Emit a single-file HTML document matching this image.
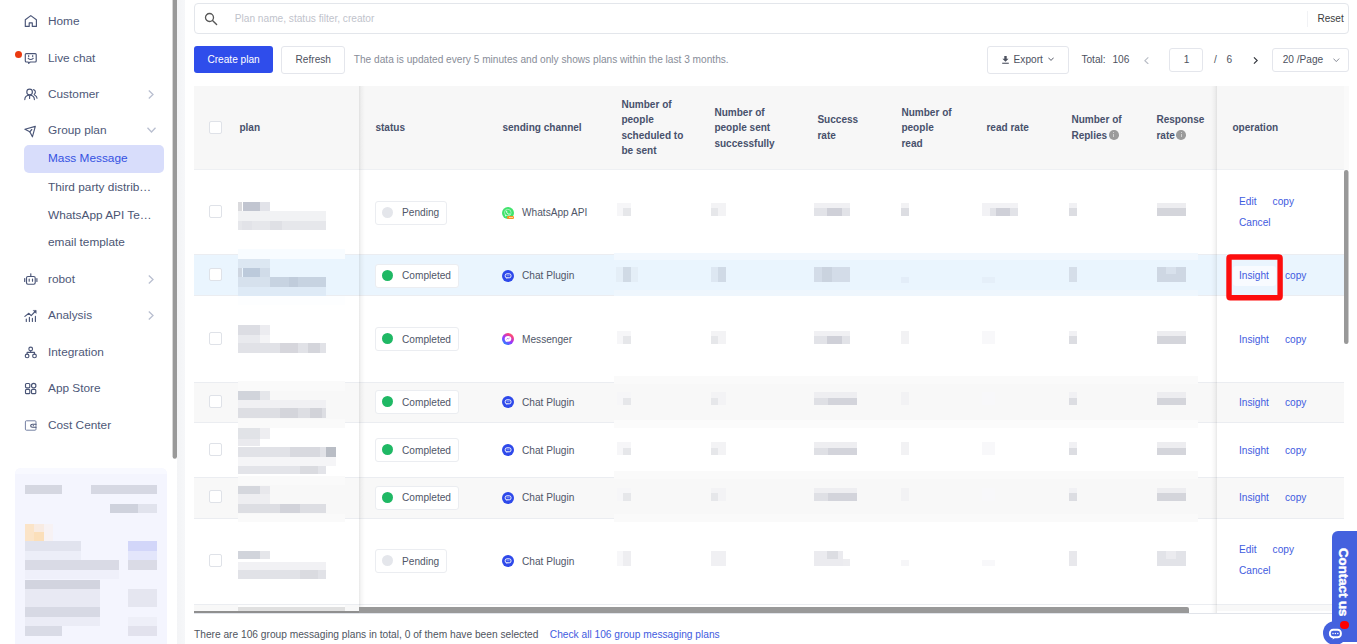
<!DOCTYPE html>
<html><head><meta charset="utf-8"><title>Mass Message</title><style>
*{box-sizing:border-box;margin:0;padding:0}
html,body{width:1357px;height:644px;overflow:hidden;background:#fff}
body{font-family:"Liberation Sans",sans-serif;position:relative;color:#4e5878}
.a{position:absolute}
.t{position:absolute;white-space:nowrap;line-height:1}
.sb{font-size:11.83px;color:#4e5878}
.b{position:absolute}
.th{position:absolute;font-weight:bold;font-size:10.05px;color:#48516c;line-height:14.2px;white-space:nowrap}
.c{font-size:10.15px;color:#4f5668}
.lnk{font-size:10.15px;color:#3f5ce0}
.tag{position:absolute;height:23.8px;border:1px solid #ebedf1;border-radius:3px;background:#fff}
.dot{position:absolute;width:11px;height:11px;border-radius:50%}
.cb{position:absolute;width:13px;height:13px;border:1px solid #dfe2e8;border-radius:2px;background:#fff}
</style></head><body>
<div class="a" style="left:177px;top:0;width:8px;height:644px;background:linear-gradient(90deg,#f3f4f6,#f6f7f9)"></div>
<svg class="a" style="left:170px;top:0" width="10" height="462" viewBox="170 0 10 462"><rect x="172.6" y="-5" width="4.4" height="463.7" rx="2.2" fill="#999"/></svg>
<div class="t sb" style="left:48px;top:15.5px">Home</div>
<div class="t sb" style="left:48px;top:52.5px">Live chat</div>
<div class="t sb" style="left:48px;top:88.5px">Customer</div>
<div class="t sb" style="left:48px;top:124.5px">Group plan</div>
<div class="t sb" style="left:48px;top:273.5px">robot</div>
<div class="t sb" style="left:48px;top:309.5px">Analysis</div>
<div class="t sb" style="left:48px;top:346.5px">Integration</div>
<div class="t sb" style="left:48px;top:382.5px">App Store</div>
<div class="t sb" style="left:48px;top:419.5px">Cost Center</div>
<div class="a" style="left:24px;top:145px;width:140px;height:28px;background:#d8ddfb;border-radius:5px"></div>
<div class="t sb" style="left:48px;top:152.5px;color:#3451e2">Mass Message</div>
<div class="t sb" style="left:48px;top:181.5px;color:#4b5573">Third party distrib…</div>
<div class="t sb" style="left:48px;top:209.5px;color:#4b5573">WhatsApp API Te…</div>
<div class="t sb" style="left:48px;top:236.5px;color:#4b5573">email template</div>
<div class="a" style="left:15px;top:51px;width:7px;height:7px;border-radius:50%;background:#ea3a10"></div>
<svg class="a" style="left:148px;top:89.5px" width="6" height="9" viewBox="0 0 6 9"><path d="M0.8 0.5 L5 4.5 L0.8 8.5" fill="none" stroke="#b9bfd0" stroke-width="1.3"/></svg>
<svg class="a" style="left:148px;top:274.5px" width="6" height="9" viewBox="0 0 6 9"><path d="M0.8 0.5 L5 4.5 L0.8 8.5" fill="none" stroke="#b9bfd0" stroke-width="1.3"/></svg>
<svg class="a" style="left:148px;top:310.5px" width="6" height="9" viewBox="0 0 6 9"><path d="M0.8 0.5 L5 4.5 L0.8 8.5" fill="none" stroke="#b9bfd0" stroke-width="1.3"/></svg>
<svg class="a" style="left:147px;top:126.6px" width="9" height="6" viewBox="0 0 9 6"><path d="M0.5 0.8 L4.5 5 L8.5 0.8" fill="none" stroke="#b9bfd0" stroke-width="1.3"/></svg>
<svg class="a" style="left:24px;top:14px;overflow:visible" width="14" height="14" viewBox="24 14 14 14" ><path d="M25.3 26.4V19.8L30.8 15.6L36.4 19.8V26.4H32.3V22.9H29.2V26.4Z" fill="none" stroke="#4a5577" stroke-width="1.15" stroke-linejoin="round" stroke-linecap="round" stroke-linejoin="miter"/></svg>
<svg class="a" style="left:24px;top:52px;overflow:visible" width="14" height="13" viewBox="24 52 14 13" ><path d="M26.3 53.6H35.2Q36.2 53.6 36.2 54.6V61Q36.2 62 35.2 62H30.2L28.7 63.4L28.2 62H26.3Q25.3 62 25.3 61V54.6Q25.3 53.6 26.3 53.6Z" fill="none" stroke="#4a5577" stroke-width="1.15" stroke-linejoin="round" stroke-linecap="round"/><path d="M28.7 55.6V56.6M32.7 55.6V56.6" fill="none" stroke="#4a5577" stroke-width="1.15" stroke-linejoin="round" stroke-linecap="round"/><path d="M28.2 58.4Q30.7 60.6 33.2 58.4" fill="none" stroke="#4a5577" stroke-width="1.15" stroke-linejoin="round" stroke-linecap="round"/></svg>
<svg class="a" style="left:24px;top:88px;overflow:visible" width="14" height="13" viewBox="24 88 14 13" ><circle cx="29.6" cy="91.9" r="2.8" fill="none" stroke="#4a5577" stroke-width="1.15" stroke-linejoin="round" stroke-linecap="round"/><path d="M24.8 99.6Q24.8 95.2 29.6 95.2Q34.4 95.2 34.4 99.6" fill="none" stroke="#4a5577" stroke-width="1.15" stroke-linejoin="round" stroke-linecap="round"/><path d="M29.6 95.8V98.4" fill="none" stroke="#4a5577" stroke-width="1.15" stroke-linejoin="round" stroke-linecap="round" stroke-width="0.9"/><path d="M33.6 89.6Q35.4 90.2 35.4 92.1Q35.4 93.6 34.2 94.5" fill="none" stroke="#4a5577" stroke-width="1.15" stroke-linejoin="round" stroke-linecap="round"/><path d="M34.8 95.2Q37 96.2 37 98.2" fill="none" stroke="#4a5577" stroke-width="1.15" stroke-linejoin="round" stroke-linecap="round"/></svg>
<svg class="a" style="left:24px;top:125px;overflow:visible" width="13" height="13" viewBox="24 125 13 13" ><path d="M35.3 126.4L24.9 129.3L29.8 131.8L32.4 136.8Z" fill="none" stroke="#4a5577" stroke-width="1.15" stroke-linejoin="round" stroke-linecap="round"/><path d="M29.8 131.8L31.8 129.5" fill="none" stroke="#4a5577" stroke-width="1.15" stroke-linejoin="round" stroke-linecap="round"/></svg>
<svg class="a" style="left:24px;top:273px;overflow:visible" width="14" height="12" viewBox="24 273 14 12" ><rect x="26.5" y="276.5" width="8.7" height="7.7" rx="1.4" fill="none" stroke="#4a5577" stroke-width="1.15" stroke-linejoin="round" stroke-linecap="round"/><path d="M30.8 273.8V276.3" fill="none" stroke="#4a5577" stroke-width="1.15" stroke-linejoin="round" stroke-linecap="round"/><path d="M24.7 278.6V281.4M36.9 278.6V281.4" fill="none" stroke="#4a5577" stroke-width="1.15" stroke-linejoin="round" stroke-linecap="round"/><path d="M29.2 279V281.2M32.5 279V281.2" fill="none" stroke="#4a5577" stroke-width="1.15" stroke-linejoin="round" stroke-linecap="round"/></svg>
<svg class="a" style="left:24px;top:309px;overflow:visible" width="14" height="13" viewBox="24 309 14 13" ><path d="M24.9 316.4L28.9 313.3L31.2 315.6L35.6 311" fill="none" stroke="#4a5577" stroke-width="1.15" stroke-linejoin="round" stroke-linecap="round"/><path d="M33.2 310.4H36.2V313.4Z" fill="#4a5577" stroke="#4a5577" stroke-width="0.5"/><path d="M26.3 319V321.5M29.4 317.4V321.5M32.4 318.4V321.5M35.4 316.4V321.5" fill="none" stroke="#4a5577" stroke-width="1.15" stroke-linejoin="round" stroke-linecap="round" stroke-linecap="butt"/></svg>
<svg class="a" style="left:24px;top:346px;overflow:visible" width="14" height="13" viewBox="24 346 14 13" ><circle cx="30.7" cy="348.9" r="1.85" fill="none" stroke="#4a5577" stroke-width="1.15" stroke-linejoin="round" stroke-linecap="round"/><circle cx="27.1" cy="355.9" r="1.85" fill="none" stroke="#4a5577" stroke-width="1.15" stroke-linejoin="round" stroke-linecap="round"/><circle cx="34.5" cy="355.9" r="1.85" fill="none" stroke="#4a5577" stroke-width="1.15" stroke-linejoin="round" stroke-linecap="round"/><path d="M30.7 350.8V352.4M27.1 354V352.4H34.5V354" fill="none" stroke="#4a5577" stroke-width="1.15" stroke-linejoin="round" stroke-linecap="round"/></svg>
<svg class="a" style="left:24px;top:382px;overflow:visible" width="14" height="13" viewBox="24 382 14 13" ><rect x="25.5" y="383.5" width="4.3" height="4.3" rx="1" fill="none" stroke="#4a5577" stroke-width="1.15" stroke-linejoin="round" stroke-linecap="round"/><circle cx="33.7" cy="385.65" r="2.2" fill="none" stroke="#4a5577" stroke-width="1.15" stroke-linejoin="round" stroke-linecap="round"/><rect x="25.5" y="389.4" width="4.3" height="4.3" rx="1" fill="none" stroke="#4a5577" stroke-width="1.15" stroke-linejoin="round" stroke-linecap="round"/><rect x="31.5" y="389.4" width="4.3" height="4.3" rx="1" fill="none" stroke="#4a5577" stroke-width="1.15" stroke-linejoin="round" stroke-linecap="round"/></svg>
<svg class="a" style="left:24px;top:419px;overflow:visible" width="14" height="13" viewBox="24 419 14 13" ><rect x="25.4" y="420.8" width="10.6" height="9.4" rx="1" fill="none" stroke="#6e7a9e" stroke-width="0.95"/><path d="M36 424.2H32.4Q30.7 424.2 30.7 425.7Q30.7 427.2 32.4 427.2H36" fill="none" stroke="#4a5577" stroke-width="1.15" stroke-linejoin="round" stroke-linecap="round" stroke-width="1"/><circle cx="33.3" cy="425.7" r="0.6" fill="#4a5577"/></svg>
<div class="a" style="left:15px;top:468px;width:152px;height:176px;background:#f4f5fe;border-radius:6px 6px 0 0"></div>
<div class="a" style="left:15px;top:468px;width:152px;height:6px;background:#f8f9ff;border-radius:6px 6px 0 0"></div>
<div class="b" style="left:25px;top:485px;width:37px;height:9px;background:#d5d7e1"></div>
<div class="b" style="left:91px;top:485px;width:66px;height:9px;background:#d6d8e3"></div>
<div class="b" style="left:110px;top:503.5px;width:28px;height:9.5px;background:#cfd2dd"></div>
<div class="b" style="left:138px;top:503.5px;width:19px;height:9.5px;background:#e1e3ed"></div>
<div class="b" style="left:25px;top:523.5px;width:9px;height:17.5px;background:#fbe4c8"></div>
<div class="b" style="left:34px;top:523.5px;width:10px;height:8.5px;background:#f8ebe2"></div>
<div class="b" style="left:34px;top:532px;width:10px;height:9px;background:#fbdfba"></div>
<div class="b" style="left:44px;top:523.5px;width:9px;height:17.5px;background:#f7f2f4"></div>
<div class="b" style="left:25px;top:541px;width:56px;height:10px;background:#e1e3ee"></div>
<div class="b" style="left:128px;top:541px;width:29px;height:10px;background:#d2d6f9"></div>
<div class="b" style="left:25px;top:551px;width:56px;height:9px;background:#eceef8"></div>
<div class="b" style="left:128px;top:551px;width:29px;height:9px;background:#e3e6fb"></div>
<div class="b" style="left:25px;top:560px;width:94px;height:10px;background:#d9dae5"></div>
<div class="b" style="left:128px;top:560px;width:29px;height:10px;background:#dadbe6"></div>
<div class="b" style="left:25px;top:570px;width:94px;height:9px;background:#eff0fa"></div>
<div class="b" style="left:25px;top:579.5px;width:75px;height:9.5px;background:#d2d4df"></div>
<div class="b" style="left:25px;top:589px;width:75px;height:18px;background:#e8e9f3"></div>
<div class="b" style="left:128px;top:589px;width:29px;height:18px;background:#e5e6f0"></div>
<div class="b" style="left:25px;top:607px;width:75px;height:10px;background:#d7d9e4"></div>
<div class="b" style="left:25px;top:617px;width:75px;height:9px;background:#ebecf6"></div>
<div class="b" style="left:128px;top:617px;width:29px;height:9px;background:#eeeff8"></div>
<div class="b" style="left:25px;top:626px;width:37px;height:10px;background:#d9dbe6"></div>
<div class="b" style="left:128px;top:626px;width:29px;height:10px;background:#e2e2ed"></div>
<div class="a" style="left:194px;top:3px;width:1154.6px;height:31px;border:1px solid #e3e6eb;border-radius:4px;background:#fff"></div>
<svg class="a" style="left:204px;top:12px" width="14" height="14" viewBox="0 0 14 14"><circle cx="5.5" cy="5.5" r="4" fill="none" stroke="#575757" stroke-width="1.3"/><path d="M8.5 8.5 L12.6 12.6" stroke="#575757" stroke-width="1.4" stroke-linecap="round"/></svg>
<div class="t" style="left:234.8px;top:14.2px;font-size:10.15px;color:#bfc3cc">Plan name, status filter, creator</div>
<div class="a" style="left:1307px;top:11px;width:1px;height:16px;background:#f1f2f5"></div>
<div class="t" style="left:1317.5px;top:14px;font-size:10.05px;color:#3c3c3e">Reset</div>
<div class="a" style="left:194px;top:46.4px;width:79px;height:26.9px;background:#2f4deb;border-radius:3px"></div>
<div class="t" style="left:207.4px;top:54.9px;font-size:10.15px;color:#fff">Create plan</div>
<div class="a" style="left:281.3px;top:46.2px;width:63.7px;height:27.5px;border:1px solid #e4e6ec;border-radius:3px;background:#fff"></div>
<div class="t" style="left:295.5px;top:54.9px;font-size:10.15px;color:#4d5260">Refresh</div>
<div class="t" style="left:353.8px;top:54.9px;font-size:10.15px;color:#888d98">The data is updated every 5 minutes and only shows plans within the last 3 months.</div>
<div class="a" style="left:987.2px;top:46.2px;width:81.7px;height:27.5px;border:1px solid #e4e6ec;border-radius:3px;background:#fff"></div>
<svg class="a" style="left:1002px;top:55.5px" width="7" height="8" viewBox="0 0 7 8"><path d="M2.3 0h2.4v2.8h1.9L3.5 5.8 0.4 2.8h1.9z" fill="#4d5260"/><rect x="0.2" y="6.7" width="6.6" height="1.1" fill="#4d5260"/></svg>
<div class="t" style="left:1013.6px;top:54.9px;font-size:10.15px;color:#4d5260">Export</div>
<svg class="a" style="left:1048px;top:57px" width="6" height="4.2" viewBox="0 0 9 6"><path d="M0.5 0.8 L4.5 5 L8.5 0.8" fill="none" stroke="#4d5260" stroke-width="1.4"/></svg>
<div class="t" style="left:1081.4px;top:54.9px;font-size:10.15px;color:#4d5260">Total:</div>
<div class="t" style="left:1112.4px;top:54.9px;font-size:10.15px;color:#4d5260">106</div>
<svg transform="scale(-1,1)" class="a" style="left:1143.6px;top:56.6px" width="5" height="7.4" viewBox="0 0 6 9"><path d="M0.8 0.5 L5 4.5 L0.8 8.5" fill="none" stroke="#b9bdc6" stroke-width="1.4"/></svg>
<div class="a" style="left:1169.1px;top:48.2px;width:33.9px;height:23.6px;border:1px solid #e4e6ec;border-radius:3px;background:#fff"></div>
<div class="t" style="left:1183.8px;top:54.9px;font-size:10.15px;color:#4d5260">1</div>
<div class="t" style="left:1214px;top:54.9px;font-size:10.15px;color:#4d5260">/</div>
<div class="t" style="left:1226.5px;top:54.9px;font-size:10.15px;color:#4d5260">6</div>
<svg class="a" style="left:1253.2px;top:57.2px" width="5.3" height="7" viewBox="0 0 6 9"><path d="M0.8 0.5 L5 4.5 L0.8 8.5" fill="none" stroke="#33363e" stroke-width="1.5"/></svg>
<div class="a" style="left:1272.2px;top:48.2px;width:76.4px;height:23.6px;border:1px solid #e4e6ec;border-radius:3px;background:#fff"></div>
<div class="t" style="left:1282.7px;top:54.9px;font-size:10.15px;color:#4d5260">20 /Page</div>
<svg class="a" style="left:1333px;top:58px" width="6.6" height="4.3" viewBox="0 0 9 6"><path d="M0.5 0.8 L4.5 5 L8.5 0.8" fill="none" stroke="#6a6f7c" stroke-width="1.1"/></svg>
<div class="a" style="left:194px;top:86px;width:1154px;height:84px;background:#f7f7f7"></div>
<div class="a" style="left:194px;top:170px;width:1150px;height:85.2px;background:#fff"></div>
<div class="a" style="left:194px;top:254.2px;width:1150px;height:1px;background:#ebedf1"></div>
<div class="a" style="left:194px;top:255.2px;width:1150px;height:40.6px;background:#eaf5fe"></div>
<div class="a" style="left:194px;top:294.8px;width:1150px;height:1px;background:#ebedf1"></div>
<div class="a" style="left:194px;top:295.8px;width:1150px;height:87.0px;background:#fff"></div>
<div class="a" style="left:194px;top:381.8px;width:1150px;height:1px;background:#ebedf1"></div>
<div class="a" style="left:194px;top:382.8px;width:1150px;height:39.7px;background:#f8f8f8"></div>
<div class="a" style="left:194px;top:421.5px;width:1150px;height:1px;background:#ebedf1"></div>
<div class="a" style="left:194px;top:422.5px;width:1150px;height:55.2px;background:#fff"></div>
<div class="a" style="left:194px;top:476.7px;width:1150px;height:1px;background:#ebedf1"></div>
<div class="a" style="left:194px;top:477.7px;width:1150px;height:40.8px;background:#f8f8f8"></div>
<div class="a" style="left:194px;top:517.5px;width:1150px;height:1px;background:#ebedf1"></div>
<div class="a" style="left:194px;top:518.5px;width:1150px;height:86.0px;background:#fff"></div>
<div class="a" style="left:194px;top:603.5px;width:1150px;height:1px;background:#ebedf1"></div>
<div class="a" style="left:194px;top:604.5px;width:165px;height:6.5px;background:#f8f8f8"></div>
<div class="a" style="left:1217px;top:604.5px;width:127px;height:6.5px;background:#f8f8f8"></div>
<div class="a" style="left:238px;top:604.5px;width:107px;height:2.5px;background:#fdfdfd"></div>
<div class="b" style="left:614px;top:252.5px;width:584.0px;height:7.1px;background:#f2f8fe"></div>
<div class="b" style="left:614px;top:290px;width:584.0px;height:5.8px;background:#eef6fd"></div>
<div class="b" style="left:614px;top:376px;width:584.0px;height:7.8px;background:#fafafa"></div>
<div class="b" style="left:614px;top:419.9px;width:584.0px;height:8.1px;background:#fbfbfb"></div>
<div class="b" style="left:614px;top:471.3px;width:584.0px;height:7.6px;background:#fafafa"></div>
<div class="b" style="left:614px;top:514.4px;width:584.0px;height:7.9px;background:#fafafa"></div>
<div class="b" style="left:238px;top:381.3px;width:107.0px;height:9.3px;background:#fafafa"></div>
<div class="b" style="left:238px;top:419px;width:107.0px;height:8.7px;background:#fafafa"></div>
<div class="b" style="left:238px;top:476px;width:107.0px;height:9.0px;background:#fafafa"></div>
<div class="b" style="left:238px;top:513.5px;width:107.0px;height:8.8px;background:#fafafa"></div>
<div class="b" style="left:237.8px;top:202px;width:4.7px;height:9.0px;background:#dadadd"></div>
<div class="b" style="left:242.5px;top:202px;width:17.5px;height:9.0px;background:#c1c5d0"></div>
<div class="b" style="left:260px;top:202px;width:10.0px;height:9.0px;background:#e2e3e9"></div>
<div class="b" style="left:237.8px;top:211px;width:88.2px;height:10.0px;background:#f1f2f4"></div>
<div class="b" style="left:237.8px;top:221px;width:88.2px;height:9.0px;background:#e6e7eb"></div>
<div class="b" style="left:270px;top:221px;width:12.0px;height:9.0px;background:#dfe0e5"></div>
<div class="b" style="left:242px;top:221px;width:10.0px;height:9.0px;background:#e2e3e8"></div>
<div class="b" style="left:238px;top:249.3px;width:107.0px;height:9.7px;background:#f8fcff"></div>
<div class="b" style="left:238px;top:296px;width:107.0px;height:9.0px;background:#fdfeff"></div>
<div class="b" style="left:237.8px;top:259px;width:32.2px;height:9.0px;background:#dce7f2"></div>
<div class="b" style="left:237.8px;top:268px;width:4.7px;height:9.0px;background:#ced6e1"></div>
<div class="b" style="left:242.5px;top:268px;width:17.5px;height:9.0px;background:#bccadb"></div>
<div class="b" style="left:260px;top:268px;width:10.0px;height:9.0px;background:#d1dce9"></div>
<div class="b" style="left:237.8px;top:277px;width:32.2px;height:10.0px;background:#d6e1ed"></div>
<div class="b" style="left:270px;top:277px;width:56.0px;height:10.0px;background:#c7d3e1"></div>
<div class="b" style="left:289px;top:277px;width:9.0px;height:10.0px;background:#c0ccdb"></div>
<div class="b" style="left:237.8px;top:287px;width:88.2px;height:9.0px;background:#deeaf6"></div>
<div class="b" style="left:237.8px;top:325px;width:22.2px;height:9.5px;background:#dcdde3"></div>
<div class="b" style="left:260px;top:325px;width:10.0px;height:9.5px;background:#ececf0"></div>
<div class="b" style="left:237.8px;top:334.5px;width:22.2px;height:8.5px;background:#e9eaee"></div>
<div class="b" style="left:260px;top:334.5px;width:10.0px;height:8.5px;background:#f4f4f6"></div>
<div class="b" style="left:237.8px;top:343px;width:88.2px;height:9.5px;background:#e1e2e7"></div>
<div class="b" style="left:280px;top:343px;width:18.0px;height:9.5px;background:#d6d6dc"></div>
<div class="b" style="left:308px;top:343px;width:12.0px;height:9.5px;background:#d4d5db"></div>
<div class="b" style="left:237.8px;top:391px;width:22.2px;height:8.6px;background:#d1d4db"></div>
<div class="b" style="left:260px;top:391px;width:10.0px;height:8.6px;background:#e5e6ea"></div>
<div class="b" style="left:237.8px;top:399.6px;width:88.2px;height:8.7px;background:#f0f0f3"></div>
<div class="b" style="left:237.8px;top:408.3px;width:88.2px;height:10.0px;background:#dddee3"></div>
<div class="b" style="left:280px;top:408.3px;width:18.0px;height:10.0px;background:#d4d5db"></div>
<div class="b" style="left:310px;top:408.3px;width:12.0px;height:10.0px;background:#d2d3d9"></div>
<div class="b" style="left:237.8px;top:428px;width:22.2px;height:10.6px;background:#e1e3e7"></div>
<div class="b" style="left:260px;top:428px;width:10.0px;height:10.6px;background:#eeeef1"></div>
<div class="b" style="left:237.8px;top:438.6px;width:22.2px;height:7.9px;background:#eaeaee"></div>
<div class="b" style="left:237.8px;top:446.5px;width:88.2px;height:10.5px;background:#e1e2e7"></div>
<div class="b" style="left:290px;top:446.5px;width:30.0px;height:10.5px;background:#d8d9df"></div>
<div class="b" style="left:326px;top:446.5px;width:10.0px;height:10.5px;background:#b9bdc5"></div>
<div class="b" style="left:237.8px;top:457px;width:98.2px;height:8.5px;background:#f5f5f7"></div>
<div class="b" style="left:237.8px;top:465.5px;width:88.2px;height:8.5px;background:#e3e4e9"></div>
<div class="b" style="left:300px;top:465.5px;width:18.0px;height:8.5px;background:#dadbe0"></div>
<div class="b" style="left:237.8px;top:485.5px;width:22.2px;height:8.5px;background:#d5d7dd"></div>
<div class="b" style="left:260px;top:485.5px;width:10.0px;height:8.5px;background:#e8e8ec"></div>
<div class="b" style="left:237.8px;top:494px;width:32.2px;height:9.6px;background:#eeeef1"></div>
<div class="b" style="left:237.8px;top:503.6px;width:88.2px;height:9.4px;background:#dddee3"></div>
<div class="b" style="left:280px;top:503.6px;width:20.0px;height:9.4px;background:#d2d3da"></div>
<div class="b" style="left:237.8px;top:550.5px;width:22.2px;height:8.5px;background:#d1d4db"></div>
<div class="b" style="left:260px;top:550.5px;width:10.0px;height:8.5px;background:#e5e6ea"></div>
<div class="b" style="left:237.8px;top:562px;width:88.2px;height:8.0px;background:#f1f1f4"></div>
<div class="b" style="left:237.8px;top:570px;width:88.2px;height:8.5px;background:#e1e2e7"></div>
<div class="b" style="left:300px;top:570px;width:18.0px;height:8.5px;background:#dadbe0"></div>
<div class="b" style="left:238px;top:607px;width:107.0px;height:3.5px;background:#e0e0e0"></div>
<div class="b" style="left:617px;top:202.5px;width:14.0px;height:13.0px;background:#f6f6f8"></div>
<div class="b" style="left:623px;top:208.0px;width:8.0px;height:7.5px;background:#e6e7ea"></div>
<div class="b" style="left:711px;top:202.5px;width:14.5px;height:13.0px;background:#f3f3f5"></div>
<div class="b" style="left:711px;top:208.0px;width:7.0px;height:7.5px;background:#e6e7ea"></div>
<div class="b" style="left:814px;top:202.5px;width:36.0px;height:13.0px;background:#f0f0f3"></div>
<div class="b" style="left:814px;top:208.0px;width:36.0px;height:7.5px;background:#e2e3e8"></div>
<div class="b" style="left:827px;top:208.0px;width:15.0px;height:7.5px;background:#cfd0d8"></div>
<div class="b" style="left:900.5px;top:202.5px;width:8.0px;height:13.0px;background:#f2f2f4"></div>
<div class="b" style="left:900.5px;top:208.0px;width:8.0px;height:7.5px;background:#dcdde2"></div>
<div class="b" style="left:981.5px;top:202.5px;width:36.5px;height:13.0px;background:#f2f2f5"></div>
<div class="b" style="left:990px;top:208.0px;width:28.0px;height:7.5px;background:#e2e3e8"></div>
<div class="b" style="left:996px;top:208.0px;width:14.0px;height:7.5px;background:#cfd0d8"></div>
<div class="b" style="left:1069px;top:202.5px;width:7.5px;height:13.0px;background:#f1f1f4"></div>
<div class="b" style="left:1069px;top:208.0px;width:7.5px;height:7.5px;background:#dcdde2"></div>
<div class="b" style="left:1156.5px;top:202.5px;width:29.5px;height:13.0px;background:#ededf0"></div>
<div class="b" style="left:1156.5px;top:208.0px;width:29.5px;height:7.5px;background:#d4d5db"></div>
<div class="b" style="left:617px;top:330.5px;width:14.0px;height:13.0px;background:#f6f6f8"></div>
<div class="b" style="left:623px;top:336.0px;width:8.0px;height:7.5px;background:#e6e7ea"></div>
<div class="b" style="left:711px;top:330.5px;width:14.5px;height:13.0px;background:#f3f3f5"></div>
<div class="b" style="left:711px;top:336.0px;width:7.0px;height:7.5px;background:#e6e7ea"></div>
<div class="b" style="left:814px;top:330.5px;width:36.0px;height:13.0px;background:#f0f0f3"></div>
<div class="b" style="left:814px;top:336.0px;width:36.0px;height:7.5px;background:#e2e3e8"></div>
<div class="b" style="left:827px;top:336.0px;width:15.0px;height:7.5px;background:#cfd0d8"></div>
<div class="b" style="left:900.5px;top:330.5px;width:8.0px;height:13.0px;background:#f2f2f4"></div>
<div class="b" style="left:900.5px;top:336.0px;width:8.0px;height:7.5px;background:#f2f2f4"></div>
<div class="b" style="left:981.5px;top:330.5px;width:13.5px;height:13.0px;background:#f8f8fa"></div>
<div class="b" style="left:1069px;top:330.5px;width:7.5px;height:13.0px;background:#f1f1f4"></div>
<div class="b" style="left:1069px;top:336.0px;width:7.5px;height:7.5px;background:#dcdde2"></div>
<div class="b" style="left:1156.5px;top:330.5px;width:29.5px;height:13.0px;background:#ededf0"></div>
<div class="b" style="left:1156.5px;top:336.0px;width:29.5px;height:7.5px;background:#d4d5db"></div>
<div class="b" style="left:617px;top:392px;width:14.0px;height:13.0px;background:#f6f6f8"></div>
<div class="b" style="left:623px;top:397.5px;width:8.0px;height:7.5px;background:#e6e7ea"></div>
<div class="b" style="left:711px;top:392px;width:14.5px;height:13.0px;background:#f3f3f5"></div>
<div class="b" style="left:711px;top:397.5px;width:7.0px;height:7.5px;background:#e6e7ea"></div>
<div class="b" style="left:814px;top:392px;width:43.0px;height:13.0px;background:#eeeef1"></div>
<div class="b" style="left:814px;top:397.5px;width:43.0px;height:7.5px;background:#dfe0e5"></div>
<div class="b" style="left:828px;top:397.5px;width:29.0px;height:7.5px;background:#d3d4db"></div>
<div class="b" style="left:900.5px;top:392px;width:8.0px;height:13.0px;background:#f2f2f4"></div>
<div class="b" style="left:900.5px;top:397.5px;width:8.0px;height:7.5px;background:#f2f2f4"></div>
<div class="b" style="left:981.5px;top:392px;width:13.5px;height:13.0px;background:#f8f8fa"></div>
<div class="b" style="left:1069px;top:392px;width:7.5px;height:13.0px;background:#f1f1f4"></div>
<div class="b" style="left:1069px;top:397.5px;width:7.5px;height:7.5px;background:#dcdde2"></div>
<div class="b" style="left:1156.5px;top:392px;width:29.5px;height:13.0px;background:#ededf0"></div>
<div class="b" style="left:1156.5px;top:397.5px;width:29.5px;height:7.5px;background:#d4d5db"></div>
<div class="b" style="left:617px;top:442px;width:14.0px;height:13.0px;background:#f6f6f8"></div>
<div class="b" style="left:623px;top:447.5px;width:8.0px;height:7.5px;background:#e6e7ea"></div>
<div class="b" style="left:711px;top:442px;width:14.5px;height:13.0px;background:#f3f3f5"></div>
<div class="b" style="left:711px;top:447.5px;width:7.0px;height:7.5px;background:#e6e7ea"></div>
<div class="b" style="left:814px;top:442px;width:43.0px;height:13.0px;background:#eeeef1"></div>
<div class="b" style="left:814px;top:447.5px;width:43.0px;height:7.5px;background:#dfe0e5"></div>
<div class="b" style="left:828px;top:447.5px;width:29.0px;height:7.5px;background:#d3d4db"></div>
<div class="b" style="left:900.5px;top:442px;width:8.0px;height:13.0px;background:#f2f2f4"></div>
<div class="b" style="left:900.5px;top:447.5px;width:8.0px;height:7.5px;background:#f2f2f4"></div>
<div class="b" style="left:981.5px;top:442px;width:13.5px;height:13.0px;background:#f8f8fa"></div>
<div class="b" style="left:1069px;top:442px;width:7.5px;height:13.0px;background:#f1f1f4"></div>
<div class="b" style="left:1069px;top:447.5px;width:7.5px;height:7.5px;background:#dcdde2"></div>
<div class="b" style="left:1156.5px;top:442px;width:29.5px;height:13.0px;background:#ededf0"></div>
<div class="b" style="left:1156.5px;top:447.5px;width:29.5px;height:7.5px;background:#d4d5db"></div>
<div class="b" style="left:617px;top:487.5px;width:14.0px;height:13.0px;background:#f6f6f8"></div>
<div class="b" style="left:623px;top:493.0px;width:8.0px;height:7.5px;background:#e6e7ea"></div>
<div class="b" style="left:711px;top:487.5px;width:14.5px;height:13.0px;background:#f3f3f5"></div>
<div class="b" style="left:711px;top:493.0px;width:7.0px;height:7.5px;background:#e6e7ea"></div>
<div class="b" style="left:814px;top:487.5px;width:43.0px;height:13.0px;background:#eeeef1"></div>
<div class="b" style="left:814px;top:493.0px;width:43.0px;height:7.5px;background:#dfe0e5"></div>
<div class="b" style="left:828px;top:493.0px;width:29.0px;height:7.5px;background:#d3d4db"></div>
<div class="b" style="left:900.5px;top:487.5px;width:8.0px;height:13.0px;background:#f2f2f4"></div>
<div class="b" style="left:900.5px;top:493.0px;width:8.0px;height:7.5px;background:#f2f2f4"></div>
<div class="b" style="left:981.5px;top:487.5px;width:13.5px;height:13.0px;background:#f8f8fa"></div>
<div class="b" style="left:1069px;top:487.5px;width:7.5px;height:13.0px;background:#f1f1f4"></div>
<div class="b" style="left:1069px;top:493.0px;width:7.5px;height:7.5px;background:#dcdde2"></div>
<div class="b" style="left:1156.5px;top:487.5px;width:29.5px;height:13.0px;background:#ededf0"></div>
<div class="b" style="left:1156.5px;top:493.0px;width:29.5px;height:7.5px;background:#d4d5db"></div>
<div class="b" style="left:616.2px;top:266.5px;width:21.8px;height:15.0px;background:#e4eef7"></div>
<div class="b" style="left:623px;top:266.5px;width:8.0px;height:15.0px;background:#d0dae5"></div>
<div class="b" style="left:711px;top:266.5px;width:15.0px;height:15.0px;background:#dde7f2"></div>
<div class="b" style="left:718px;top:266.5px;width:8.0px;height:15.0px;background:#d0dae6"></div>
<div class="b" style="left:814px;top:266.5px;width:36.0px;height:15.0px;background:#d3dce8"></div>
<div class="b" style="left:822px;top:266.5px;width:10.0px;height:15.0px;background:#cad3df"></div>
<div class="b" style="left:900.5px;top:277px;width:8.0px;height:6.0px;background:#e3edf8"></div>
<div class="b" style="left:981.5px;top:277px;width:13.5px;height:6.0px;background:#e5eff9"></div>
<div class="b" style="left:1069px;top:266.5px;width:7.5px;height:15.0px;background:#d5dee9"></div>
<div class="b" style="left:1156.5px;top:266.5px;width:29.5px;height:15.0px;background:#ced7e3"></div>
<div class="b" style="left:1166px;top:266.5px;width:10.0px;height:7.5px;background:#d8e1ec"></div>
<div class="b" style="left:617px;top:551px;width:14.0px;height:15.0px;background:#f7f7f9"></div>
<div class="b" style="left:623px;top:551px;width:8.0px;height:15.0px;background:#eeeef1"></div>
<div class="b" style="left:711px;top:551px;width:15.0px;height:15.0px;background:#f0f0f3"></div>
<div class="b" style="left:814px;top:551px;width:29.0px;height:15.0px;background:#ebebef"></div>
<div class="b" style="left:827px;top:551px;width:11.0px;height:8.0px;background:#dcdde2"></div>
<div class="b" style="left:843px;top:559px;width:7.0px;height:7.0px;background:#ededf0"></div>
<div class="b" style="left:900.5px;top:560px;width:8.0px;height:6.0px;background:#f6f6f8"></div>
<div class="b" style="left:981.5px;top:560px;width:13.5px;height:6.0px;background:#f8f8fa"></div>
<div class="b" style="left:1069px;top:551px;width:7.5px;height:15.0px;background:#e8e8ec"></div>
<div class="b" style="left:1156.5px;top:551px;width:29.5px;height:15.0px;background:#e2e3e8"></div>
<div class="b" style="left:1166px;top:551px;width:10.0px;height:8.0px;background:#ebebef"></div>
<div class="cb" style="left:209px;top:205.4px"></div>
<div class="tag" style="left:375px;top:201.0px;width:71.5px"></div>
<div class="dot" style="left:381.7px;top:206.9px;background:#e4e6eb"></div>
<div class="t c" style="left:402px;top:208.4px">Pending</div>
<div class="a" style="left:502.1px;top:207.0px;width:12px;height:12px;border-radius:50%;background:#41e36c"></div><svg class="a" style="left:502.1px;top:207.0px" width="12" height="12" viewBox="0 0 12 12"><circle cx="5.8" cy="5.6" r="3.3" fill="none" stroke="#c9f7d6" stroke-width="0.7"/><path d="M4.6 4.2Q4.4 5.6 5.5 6.5Q6.4 7.4 7.4 7.1" fill="none" stroke="#f2fff5" stroke-width="0.95" stroke-linecap="round"/><path d="M3 9.4L3.4 7.6L4.6 8.8Z" fill="#e8fcee"/></svg><div class="a" style="left:507.1px;top:215.6px;width:7.3px;height:3.1px;border-radius:1.2px;background:#f7951e"></div><div class="a" style="left:508.70000000000005px;top:216.6px;width:4.2px;height:1.1px;background:#fbd3a0"></div>
<div class="t c" style="left:522px;top:208.4px">WhatsApp API</div>
<div class="t lnk" style="left:1239px;top:196.9px">Edit</div>
<div class="t lnk" style="left:1272.6px;top:196.9px">copy</div>
<div class="t lnk" style="left:1239px;top:218.0px">Cancel</div>
<div class="cb" style="left:209px;top:268.4px"></div>
<div class="tag" style="left:375px;top:264.0px;width:83.5px"></div>
<div class="dot" style="left:381.7px;top:269.9px;background:#1fb864"></div>
<div class="t c" style="left:402px;top:271.4px">Completed</div>
<div class="a" style="left:502.1px;top:270.0px;width:12px;height:12px;border-radius:50%;background:#2e49ea"></div><svg class="a" style="left:502.1px;top:270.0px" width="12" height="12" viewBox="0 0 12 12"><rect x="3.2" y="3.8" width="5.8" height="4" rx="1.7" fill="none" stroke="#fff" stroke-width="0.95"/><path d="M4.6 7.8L4.4 9L5.8 7.8Z" fill="#fff"/><rect x="4.6" y="5.5" width="3" height="0.6" fill="#aab6f6"/></svg>
<div class="t c" style="left:522px;top:271.4px">Chat Plugin</div>
<div class="t lnk" style="left:1239px;top:271.4px">Insight</div>
<div class="t lnk" style="left:1285px;top:271.4px">copy</div>
<div class="cb" style="left:209px;top:331.8px"></div>
<div class="tag" style="left:375px;top:327.4px;width:83.5px"></div>
<div class="dot" style="left:381.7px;top:333.3px;background:#1fb864"></div>
<div class="t c" style="left:402px;top:334.8px">Completed</div>
<svg class="a" style="left:502.1px;top:333.40000000000003px" width="12" height="12" viewBox="0 0 12 12"><defs><linearGradient id="mg" x1="0.2" y1="1" x2="0.85" y2="0.05"><stop offset="0" stop-color="#1690ff"/><stop offset="0.45" stop-color="#9a35ff"/><stop offset="0.8" stop-color="#f5408a"/><stop offset="1" stop-color="#ff6a60"/></linearGradient></defs><circle cx="6" cy="6" r="6" fill="url(#mg)"/><ellipse cx="6" cy="5.8" rx="3.3" ry="2.9" fill="#fff"/><path d="M3.6 7.2L3.9 9.1L5.6 8.3Z" fill="#fff"/><path d="M4.6 6.5L5.7 5.2L6.5 6L7.6 5" fill="none" stroke="#a24cf5" stroke-width="0.7"/></svg>
<div class="t c" style="left:522px;top:334.8px">Messenger</div>
<div class="t lnk" style="left:1239px;top:334.8px">Insight</div>
<div class="t lnk" style="left:1285px;top:334.8px">copy</div>
<div class="cb" style="left:209px;top:394.7px"></div>
<div class="tag" style="left:375px;top:390.3px;width:83.5px"></div>
<div class="dot" style="left:381.7px;top:396.2px;background:#1fb864"></div>
<div class="t c" style="left:402px;top:397.7px">Completed</div>
<div class="a" style="left:502.1px;top:396.3px;width:12px;height:12px;border-radius:50%;background:#2e49ea"></div><svg class="a" style="left:502.1px;top:396.3px" width="12" height="12" viewBox="0 0 12 12"><rect x="3.2" y="3.8" width="5.8" height="4" rx="1.7" fill="none" stroke="#fff" stroke-width="0.95"/><path d="M4.6 7.8L4.4 9L5.8 7.8Z" fill="#fff"/><rect x="4.6" y="5.5" width="3" height="0.6" fill="#aab6f6"/></svg>
<div class="t c" style="left:522px;top:397.7px">Chat Plugin</div>
<div class="t lnk" style="left:1239px;top:397.7px">Insight</div>
<div class="t lnk" style="left:1285px;top:397.7px">copy</div>
<div class="cb" style="left:209px;top:442.6px"></div>
<div class="tag" style="left:375px;top:438.2px;width:83.5px"></div>
<div class="dot" style="left:381.7px;top:444.1px;background:#1fb864"></div>
<div class="t c" style="left:402px;top:445.6px">Completed</div>
<div class="a" style="left:502.1px;top:444.2px;width:12px;height:12px;border-radius:50%;background:#2e49ea"></div><svg class="a" style="left:502.1px;top:444.2px" width="12" height="12" viewBox="0 0 12 12"><rect x="3.2" y="3.8" width="5.8" height="4" rx="1.7" fill="none" stroke="#fff" stroke-width="0.95"/><path d="M4.6 7.8L4.4 9L5.8 7.8Z" fill="#fff"/><rect x="4.6" y="5.5" width="3" height="0.6" fill="#aab6f6"/></svg>
<div class="t c" style="left:522px;top:445.6px">Chat Plugin</div>
<div class="t lnk" style="left:1239px;top:445.6px">Insight</div>
<div class="t lnk" style="left:1285px;top:445.6px">copy</div>
<div class="cb" style="left:209px;top:490.2px"></div>
<div class="tag" style="left:375px;top:485.8px;width:83.5px"></div>
<div class="dot" style="left:381.7px;top:491.7px;background:#1fb864"></div>
<div class="t c" style="left:402px;top:493.2px">Completed</div>
<div class="a" style="left:502.1px;top:491.8px;width:12px;height:12px;border-radius:50%;background:#2e49ea"></div><svg class="a" style="left:502.1px;top:491.8px" width="12" height="12" viewBox="0 0 12 12"><rect x="3.2" y="3.8" width="5.8" height="4" rx="1.7" fill="none" stroke="#fff" stroke-width="0.95"/><path d="M4.6 7.8L4.4 9L5.8 7.8Z" fill="#fff"/><rect x="4.6" y="5.5" width="3" height="0.6" fill="#aab6f6"/></svg>
<div class="t c" style="left:522px;top:493.2px">Chat Plugin</div>
<div class="t lnk" style="left:1239px;top:493.2px">Insight</div>
<div class="t lnk" style="left:1285px;top:493.2px">copy</div>
<div class="cb" style="left:209px;top:553.7px"></div>
<div class="tag" style="left:375px;top:549.3px;width:71.5px"></div>
<div class="dot" style="left:381.7px;top:555.2px;background:#e4e6eb"></div>
<div class="t c" style="left:402px;top:556.7px">Pending</div>
<div class="a" style="left:502.1px;top:555.3px;width:12px;height:12px;border-radius:50%;background:#2e49ea"></div><svg class="a" style="left:502.1px;top:555.3px" width="12" height="12" viewBox="0 0 12 12"><rect x="3.2" y="3.8" width="5.8" height="4" rx="1.7" fill="none" stroke="#fff" stroke-width="0.95"/><path d="M4.6 7.8L4.4 9L5.8 7.8Z" fill="#fff"/><rect x="4.6" y="5.5" width="3" height="0.6" fill="#aab6f6"/></svg>
<div class="t c" style="left:522px;top:556.7px">Chat Plugin</div>
<div class="t lnk" style="left:1239px;top:545.2px">Edit</div>
<div class="t lnk" style="left:1272.6px;top:545.2px">copy</div>
<div class="t lnk" style="left:1239px;top:566.3px">Cancel</div>
<div class="a" style="left:1232.5px;top:265.5px;width:43.5px;height:20px;background:#f8fbff;border-radius:3px"></div>
<div class="t lnk" style="left:1239px;top:270.9px">Insight</div>
<svg class="a" style="left:1220px;top:250px" width="70" height="56" viewBox="1220 250 70 56"><rect x="1229" y="257" width="51.1" height="40.7" rx="1.2" fill="none" stroke="#fd0d0d" stroke-width="5.4" stroke-linejoin="round"/></svg>
<div class="a" style="left:1344px;top:86px;width:4.5px;height:84px;background:#fafafa"></div>
<div class="a" style="left:194px;top:169px;width:1150px;height:1px;background:#eef0f3"></div>
<div class="cb" style="left:209px;top:121px"></div>
<div class="th" style="left:239.4px;top:120.1px;line-height:15.4px">plan</div>
<div class="th" style="left:375.4px;top:120.1px;line-height:15.4px">status</div>
<div class="th" style="left:502.4px;top:120.1px;line-height:15.4px">sending channel</div>
<div class="th" style="left:621.4px;top:97.0px;line-height:15.4px">Number of<br>people<br>scheduled to<br>be sent</div>
<div class="th" style="left:714.4px;top:104.7px;line-height:15.4px">Number of<br>people sent<br>successfully</div>
<div class="th" style="left:817.4px;top:112.4px;line-height:15.4px">Success<br>rate</div>
<div class="th" style="left:901.4px;top:104.7px;line-height:15.4px">Number of<br>people<br>read</div>
<div class="th" style="left:986.4px;top:120.1px;line-height:15.4px">read rate</div>
<div class="th" style="left:1071.4px;top:112.4px;line-height:15.4px">Number of<br>Replies</div>
<div class="th" style="left:1156.4px;top:112.4px;line-height:15.4px">Response<br>rate</div>
<div class="th" style="left:1232.4px;top:120.1px;line-height:15.4px">operation</div>
<div class="a" style="left:1108.9px;top:129.9px;width:9.7px;height:9.7px;border-radius:50%;background:#9b9b9b"></div><div class="a" style="left:1113.2px;top:134.1px;width:1.1px;height:3.4px;background:#d0d0d0"></div><div class="a" style="left:1113.2px;top:132.1px;width:1.1px;height:1.1px;background:#d0d0d0"></div>
<div class="a" style="left:1176.2px;top:129.9px;width:9.7px;height:9.7px;border-radius:50%;background:#9b9b9b"></div><div class="a" style="left:1180.5px;top:134.1px;width:1.1px;height:3.4px;background:#d0d0d0"></div><div class="a" style="left:1180.5px;top:132.1px;width:1.1px;height:1.1px;background:#d0d0d0"></div>
<div class="a" style="left:359px;top:86px;width:6px;height:525px;background:linear-gradient(90deg,rgba(0,0,0,.09),rgba(0,0,0,.035) 35%,rgba(0,0,0,0))"></div>
<div class="a" style="left:1211px;top:86px;width:6px;height:527px;background:linear-gradient(270deg,rgba(0,0,0,.09),rgba(0,0,0,.035) 35%,rgba(0,0,0,0))"></div>
<div class="a" style="left:194px;top:611px;width:170px;height:2px;background:#8f8f8f"></div>
<div class="a" style="left:359px;top:607px;width:830px;height:6px;background:#999;border-radius:0 2px 0 0"></div>
<div class="a" style="left:194px;top:613px;width:1154px;height:1px;background:#e1e4ea"></div>
<svg class="a" style="left:1340px;top:168px" width="12" height="180" viewBox="1340 168 12 180"><rect x="1344" y="169.9" width="4.5" height="174.1" rx="2.2" fill="#999"/></svg>
<div class="t" style="left:194px;top:629.5px;font-size:10.2px;color:#4f5560">There are 106 group messaging plans in total, 0 of them have been selected</div>
<div class="t lnk" style="left:549.8px;top:629.5px;font-size:10.2px">Check all 106 group messaging plans</div>
<div class="a" style="left:1331.6px;top:530.5px;width:26px;height:111px;background:#4461de;border-radius:6px 0 0 0"></div>
<div class="a" style="left:1323.1px;top:621px;width:24.2px;height:24.2px;border-radius:50%;background:#4461de"></div>
<div class="t" style="left:1337.4px;top:548.4px;font-size:13.25px;font-weight:bold;color:#fff;-webkit-text-stroke:0.45px #fff;transform-origin:0 0;transform:rotate(90deg) translate(0,-100%)">Contact us</div>
<svg class="a" style="left:1326px;top:624px" width="20" height="18" viewBox="1326 624 20 18"><rect x="1329.9" y="629.7" width="11" height="7.5" rx="3.3" fill="none" stroke="#fff" stroke-width="1.9"/><path d="M1333 637.6L1332.6 639.4L1335 637.8Z" fill="#fff"/><circle cx="1333" cy="633.45" r="0.75" fill="#fff"/><circle cx="1335.4" cy="633.45" r="0.75" fill="#fff"/><circle cx="1337.8" cy="633.45" r="0.75" fill="#fff"/></svg>
<div class="a" style="left:1339.9px;top:620.6px;width:8.8px;height:8.8px;border-radius:50%;background:#ff0000"></div>
</body></html>
